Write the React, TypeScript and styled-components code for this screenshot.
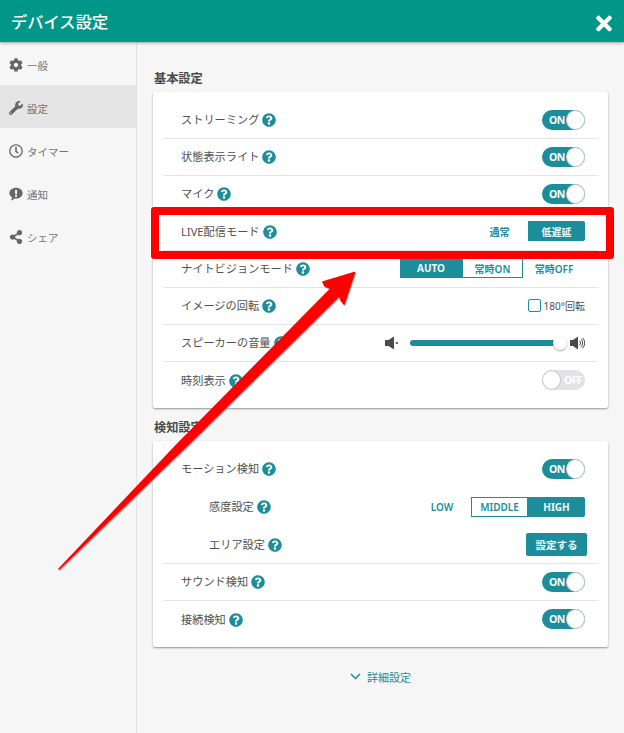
import React from "react";
import styled, { createGlobalStyle } from "styled-components";
import { FaCog, FaWrench, FaRegClock, FaShareAlt, FaQuestionCircle, FaTimes } from "react-icons/fa";

const TEAL = "#1b8d9b";

const Global = createGlobalStyle`
  html, body { margin: 0; padding: 0; background: #f6f6f6; }
  body { font-family: "Noto Sans", "Noto Sans CJK JP", sans-serif; color: #4a4a4a; }
  * { box-sizing: border-box; }
`;

const Page = styled.div`
  position: relative;
  width: 624px;
  height: 733px;
  overflow: hidden;
  display: flex;
  flex-direction: column;
  background: #f6f6f6;
`;

const Header = styled.header`
  height: 42px;
  flex: none;
  background: #009688;
  box-shadow: 0 1px 3px rgba(0, 0, 0, 0.35);
  display: flex;
  align-items: center;
  justify-content: space-between;
  padding: 0 12px 0 11px;
  position: relative;
  z-index: 1;
`;

const HeaderTitle = styled.h1`
  margin: 0;
  font-size: 16.3px;
  font-weight: 500;
  color: #fff;
`;

const CloseIcon = styled(FaTimes)`
  width: 16px;
  height: 23px;
  color: #fff;
  margin-top: 5px;
`;

const Body = styled.div`
  flex: 1;
  display: flex;
  min-height: 0;
`;

const Sidebar = styled.nav`
  width: 137px;
  flex: none;
  border-right: 1px solid #e2e2e2;
`;

const NavItem = styled.div<{ $active?: boolean }>`
  height: 43px;
  display: flex;
  align-items: center;
  gap: 4px;
  padding: 3px 0 0 9px;
  font-size: 10.5px;
  color: #737373;
  background: ${(p) => (p.$active ? "#e5e5e5" : "transparent")};
  svg { width: 14px; height: 14px; color: #666; flex: none; margin-top: -1px; }
`;

const Main = styled.main`
  flex: 1;
  padding: 27px 16px 0 16px;
`;

const SectionTitle = styled.h2<{ $spaced?: boolean }>`
  margin: ${(p) => (p.$spaced ? "10px" : "0")} 0 0 1px;
  height: 23px;
  font-size: 12.2px;
  line-height: 20px;
  font-weight: 700;
  color: #4a4a4a;
`;

const Card = styled.section`
  background: #fff;
  border-radius: 2px;
  padding: 10px 10px 8px;
  box-shadow: 0 1px 2px rgba(0, 0, 0, 0.4);
`;

const Row = styled.div<{ $plain?: boolean; $sub?: boolean; $tall?: boolean }>`
  height: ${(p) => (p.$tall ? "37.9px" : "37.2px")};
  display: flex;
  align-items: center;
  justify-content: space-between;
  padding: 0 13px 1px ${(p) => (p.$sub ? "46px" : "18px")};
  border-bottom: ${(p) => (p.$plain ? "none" : "1px solid #e4e4e4")};
`;

const Label = styled.div`
  display: flex;
  align-items: center;
  gap: 3px;
  font-size: 11.2px;
  color: #4f4f4f;
  margin-bottom: 1px;
`;

const Help = styled(FaQuestionCircle)`
  width: 14px;
  height: 14px;
  color: ${TEAL};
  margin-top: 2px;
  flex: none;
`;

const ToggleTrack = styled.div<{ $on: boolean }>`
  position: relative;
  width: 43px;
  height: 20px;
  border-radius: 10px;
  background: ${(p) => (p.$on ? TEAL : "#e2e2e2")};
  color: #fff;
  font-size: 10.5px;
  letter-spacing: -0.6px;
  font-weight: 700;
  line-height: 20px;
  padding: ${(p) => (p.$on ? "0 0 0 7px" : "0 0 0 22px")};
`;

const ToggleKnob = styled.span<{ $on: boolean }>`
  position: absolute;
  top: 0;
  ${(p) => (p.$on ? "right: 0;" : "left: 0;")}
  width: 19px;
  height: 20px;
  border-radius: 50%;
  background: #fff;
  border: 1px solid #b9cfd2;
`;

const Toggle = ({ on = true }: { on?: boolean }) => (
  <ToggleTrack $on={on}>
    {on ? "ON" : "OFF"}
    <ToggleKnob $on={on} />
  </ToggleTrack>
);

const Segments = styled.div`
  display: flex;
  height: 20px;
`;

const Segment = styled.div<{ $w: number; $selected?: boolean; $outlined?: boolean; $last?: boolean }>`
  width: ${(p) => p.$w}px;
  height: 100%;
  display: flex;
  align-items: center;
  justify-content: center;
  font-size: 10px;
  font-weight: ${(p) => (p.$selected ? 700 : 600)};
  background: ${(p) => (p.$selected ? TEAL : "#fff")};
  color: ${(p) => (p.$selected ? "#f1fafb" : TEAL)};
  border: 1px solid ${(p) => (p.$outlined ? TEAL : "transparent")};
  border-radius: ${(p) => (p.$last ? "0 2px 2px 0" : "0")};
`;

const CheckWrap = styled.div`
  display: flex;
  align-items: center;
  gap: 3px;
  font-size: 10px;
  color: #4f4f4f;
`;

const CheckBox = styled.span`
  width: 13px;
  height: 13px;
  border: 1px solid ${TEAL};
  border-radius: 2px;
  background: #fff;
`;

const VolumeWrap = styled.div`
  display: flex;
  align-items: center;
  svg { flex: none; }
`;

const VolumeTrack = styled.div`
  position: relative;
  width: 155px;
  height: 6px;
  margin: 0 5px 0 11px;
  border-radius: 3px;
  background: ${TEAL};
`;

const VolumeKnob = styled.span`
  position: absolute;
  right: -2px;
  top: -4px;
  width: 14px;
  height: 14px;
  border-radius: 50%;
  background: #fff;
  box-shadow: 0 1px 2px rgba(0, 0, 0, 0.35);
`;

const SetButton = styled.div`
  width: 61px;
  height: 23px;
  margin-right: -2px;
  border-radius: 2px;
  background: ${TEAL};
  color: #f1fafb;
  font-size: 10.5px;
  font-weight: 700;
  display: flex;
  align-items: center;
  justify-content: center;
`;

const MoreLink = styled.div`
  margin-top: 20px;
  height: 20px;
  display: flex;
  align-items: center;
  justify-content: center;
  gap: 6px;
  font-size: 11px;
  color: ${TEAL};
`;

const RedFrame = styled.div`
  position: absolute;
  left: 151px;
  top: 207px;
  width: 463px;
  height: 52px;
  border: 8px solid #ff0000;
  border-radius: 3px;
`;

const ArrowSvg = styled.svg`
  position: absolute;
  left: 0;
  top: 0;
  pointer-events: none;
`;

const BubbleIcon = () => (
  <svg viewBox="0 0 14 14">
    <path d="M7 .8c3.7 0 6.6 2.4 6.6 5.4S10.700 11.600 7 11.600c-.6 0-1.100 0-1.600-.2-.9.9-2 1.700-3.600 1.900.7-.8 1.200-1.700 1.300-2.900C1.600 9.400.4 7.900.4 6.200.4 3.200 3.300.8 7 .8z" fill="currentColor" />
    <rect x="6.100" y="2.800" width="1.900" height="4.600" fill="#f6f6f6" />
    <rect x="6.100" y="8.200" width="1.900" height="1.800" fill="#f6f6f6" />
  </svg>
);

const MuteIcon = () => (
  <svg width="14" height="14" viewBox="0 0 14 14">
    <path d="M0 4h3.500L9 .6v12.800L3.500 10H0z" fill="#4a4a4a" />
    <path d="M10.800 6l2 2M12.800 6l-2 2" stroke="#4a4a4a" strokeWidth="1" />
  </svg>
);

const LoudIcon = () => (
  <svg width="15" height="14" viewBox="0 0 15 14">
    <path d="M0 4h3L8 .6v12.800L3 10H0z" fill="#4a4a4a" />
    <path d="M9.500 4.800a3 3 0 0 1 0 4.400M11 3.200a5.200 5.200 0 0 1 0 7.600M12.500 1.800a7.200 7.200 0 0 1 0 10.400" stroke="#4a4a4a" strokeWidth="1" fill="none" />
  </svg>
);

const Chevron = () => (
  <svg width="11" height="7" viewBox="0 0 11 7">
    <path d="M1 1l4.500 4.500L10 1" stroke={TEAL} strokeWidth="1.500" fill="none" />
  </svg>
);

const ARROW =
  "59,569 178,443.500 331,288.500 325,286 323,282 354.500,272.500 344,304 341,300 339.500,295.500 189.500,443";

const App = () => (
  <Page>
    <Global />
    <Header>
      <HeaderTitle>デバイス設定</HeaderTitle>
      <CloseIcon />
    </Header>
    <Body>
      <Sidebar>
        <NavItem><FaCog />一般</NavItem>
        <NavItem $active><FaWrench />設定</NavItem>
        <NavItem><FaRegClock />タイマー</NavItem>
        <NavItem><BubbleIcon />通知</NavItem>
        <NavItem><FaShareAlt />シェア</NavItem>
      </Sidebar>
      <Main>
        <SectionTitle>基本設定</SectionTitle>
        <Card>
          <Row><Label>ストリーミング<Help /></Label><Toggle /></Row>
          <Row><Label>状態表示ライト<Help /></Label><Toggle /></Row>
          <Row><Label>マイク<Help /></Label><Toggle /></Row>
          <Row>
            <Label>LIVE配信モード<Help /></Label>
            <Segments>
              <Segment $w={57}>通常</Segment>
              <Segment $w={57} $selected $last>低遅延</Segment>
            </Segments>
          </Row>
          <Row>
            <Label>ナイトビジョンモード<Help /></Label>
            <Segments>
              <Segment $w={62} $selected>AUTO</Segment>
              <Segment $w={61} $outlined>常時ON</Segment>
              <Segment $w={62}>常時OFF</Segment>
            </Segments>
          </Row>
          <Row>
            <Label>イメージの回転<Help /></Label>
            <CheckWrap><CheckBox />180°回転</CheckWrap>
          </Row>
          <Row>
            <Label>スピーカーの音量<Help /></Label>
            <VolumeWrap>
              <MuteIcon />
              <VolumeTrack><VolumeKnob /></VolumeTrack>
              <LoudIcon />
            </VolumeWrap>
          </Row>
          <Row $plain><Label>時刻表示<Help /></Label><Toggle on={false} /></Row>
        </Card>
        <SectionTitle $spaced>検知設定</SectionTitle>
        <Card>
          <Row $plain $tall><Label>モーション検知<Help /></Label><Toggle /></Row>
          <Row $plain $sub $tall>
            <Label>感度設定<Help /></Label>
            <Segments>
              <Segment $w={58}>LOW</Segment>
              <Segment $w={57} $outlined>MIDDLE</Segment>
              <Segment $w={57} $selected $last>HIGH</Segment>
            </Segments>
          </Row>
          <Row $sub $tall><Label>エリア設定<Help /></Label><SetButton>設定する</SetButton></Row>
          <Row><Label>サウンド検知<Help /></Label><Toggle /></Row>
          <Row $plain><Label>接続検知<Help /></Label><Toggle /></Row>
        </Card>
        <MoreLink><Chevron />詳細設定</MoreLink>
      </Main>
    </Body>
    <RedFrame />
    <ArrowSvg width="624" height="733" viewBox="0 0 624 733">
      <polygon points={ARROW} fill="#555" stroke="#555" strokeWidth="1.500" strokeLinejoin="round" transform="translate(1 1)" opacity="0.5" />
      <polygon points={ARROW} fill="#ff0000" stroke="#ff0000" strokeWidth="1.500" strokeLinejoin="round" />
    </ArrowSvg>
  </Page>
);

export default App;
